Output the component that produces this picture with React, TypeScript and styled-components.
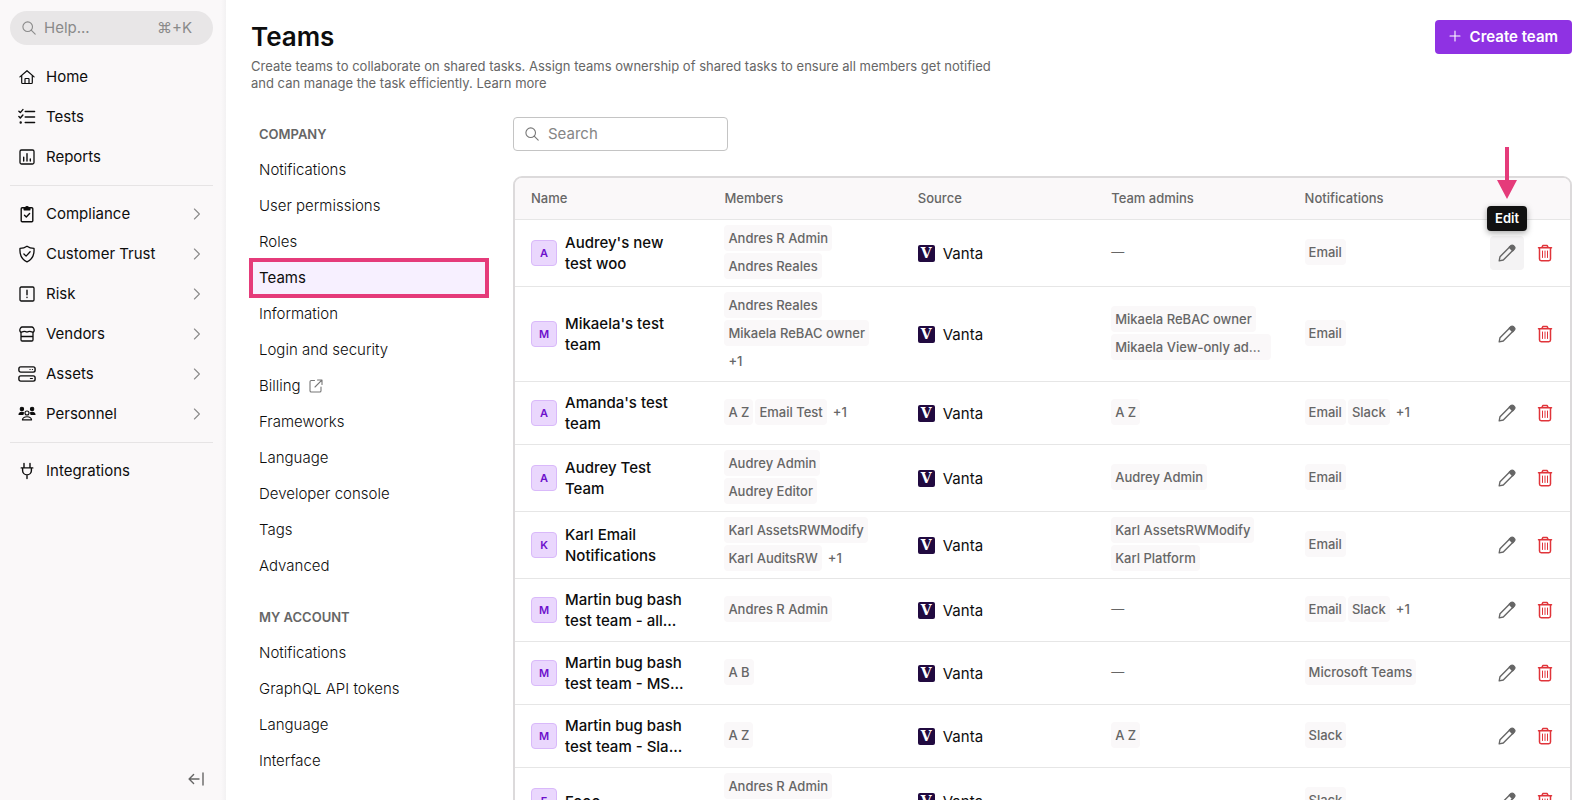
import React, { useState } from "react";
import styled, { createGlobalStyle, css } from "styled-components";

const GlobalStyle = createGlobalStyle`
  *, *::before, *::after { box-sizing: border-box; }
  body {
    margin: 0;
    background: #fff;
    color: #0d0d0d;
    font-family: Inter, "Liberation Sans", sans-serif;
    font-size: 15px;
    line-height: 21px;
  }
  button, input { font: inherit; color: inherit; }
  a { color: inherit; text-decoration: none; }
`;

/* ---------- Icons ---------- */

const Svg = styled.svg`
  flex: none;
  display: block;
  fill: none;
  stroke: currentColor;
  stroke-linecap: round;
  stroke-linejoin: round;
`;

const SearchIcon = () => (
  <Svg width="14" height="14" viewBox="0 0 14 14" strokeWidth="1.1">
    <circle cx="5.7" cy="5.7" r="4.8" />
    <path d="M9.2 9.2 13.2 13.2" />
  </Svg>
);

const HomeIcon = () => (
  <Svg width="18" height="18" viewBox="0 0 18 18" strokeWidth="1.2">
    <path d="M1.900 8.900 9 2.700l7.100 6.200" />
    <path d="M3.700 7.600v7c0 .5.300.9.800.9h9c.500 0 .8-.4.8-.9v-7" />
    <path d="M7 15.300v-4.300c0-.3.200-.5.500-.5h3c.3 0 .5.200.5.500v4.300" />
  </Svg>
);

const TestsIcon = () => (
  <Svg width="18" height="18" viewBox="0 0 18 18" strokeWidth="1.4">
    <path d="M7.200 3.500h9.400M7.200 9h9.400M7.200 14.500h9.400" />
    <path d="m.9 3.200 1.400 1.400 2.600-3M.9 8.600 2.300 10l2.600-3" />
    <circle cx="2.700" cy="14.500" r=".5" fill="currentColor" />
  </Svg>
);

const ReportsIcon = () => (
  <Svg width="18" height="18" viewBox="0 0 18 18" strokeWidth="1.3">
    <rect x="2" y="2" width="14" height="14" rx="1.500" />
    <path d="M5.700 9.300v3.700M9 5.600V13M12.300 11v2" strokeWidth="1.400" />
  </Svg>
);

const ComplianceIcon = () => (
  <Svg width="18" height="18" viewBox="0 0 18 18" strokeWidth="1.4">
    <rect x="3.200" y="2.800" width="11.600" height="14" rx="1" />
    <path d="M6.200 4.800V2.700h1.400a1.500 1.500 0 0 1 2.800 0h1.400v2.100z" fill="currentColor" />
    <path d="m6.500 10.200 1.800 1.700 3.300-3.500" />
  </Svg>
);

const TrustIcon = () => (
  <Svg width="18" height="18" viewBox="0 0 18 18" strokeWidth="1.3">
    <path d="M9 1.200c2 1.400 4.300 2.100 7 2.200.5 6.300-1.700 11.100-7 13.400-5.300-2.300-7.500-7.100-7-13.400C4.700 3.300 7 2.600 9 1.200z" />
    <path d="m5.900 9 2.200 2.100 4-4.300" />
  </Svg>
);

const RiskIcon = () => (
  <Svg width="18" height="18" viewBox="0 0 18 18" strokeWidth="1.3">
    <rect x="2" y="2" width="14" height="14" rx="1.200" />
    <path d="M9 5.300v4.400M9 12.300v.2" strokeWidth="1.400" />
  </Svg>
);

const VendorsIcon = () => (
  <Svg width="18" height="18" viewBox="0 0 18 18" strokeWidth="1.3">
    <path d="M4.200 2h9.600c1.300 0 2.400 1.700 2.400 3.200 0 1.200-.9 1.900-1.900 1.900-1.100 0-1.700-.8-2.700-.8s-1.600.8-2.600.8-1.600-.8-2.600-.8-1.600.8-2.700.8c-1 0-1.900-.7-1.900-1.900C1.800 3.700 2.900 2 4.200 2z" />
    <path d="M3 7.300v7.500c0 .7.500 1.200 1.200 1.200h9.600c.7 0 1.200-.5 1.200-1.200V7.300M3.200 11.500h11.600" />
  </Svg>
);

const AssetsIcon = () => (
  <Svg width="18" height="18" viewBox="0 0 18 18" strokeWidth="1.4">
    <rect x=".9" y="1.900" width="16.200" height="5.200" rx="1.800" />
    <rect x=".9" y="10.900" width="16.200" height="5.200" rx="1.800" />
    <path d="M12 4.500h.1M14.400 4.500h.1M12.400 13.500h2" strokeWidth="1.200" />
  </Svg>
);

const PersonnelIcon = () => (
  <Svg width="18" height="18" viewBox="0 0 18 18" strokeWidth="1.1">
    <circle cx="3.900" cy="3.900" r="1.700" fill="currentColor" />
    <circle cx="14.100" cy="3.900" r="1.700" fill="currentColor" />
    <path d="M1 9.500c.2-1.500 1.300-2.300 2.900-2.300.8 0 1.400.2 1.800.6-.7.500-.8 1-.7 1.700zM17 9.500c-.2-1.500-1.300-2.300-2.900-2.300-.8 0-1.400.2-1.800.6.700.5.8 1 .7 1.700z" fill="currentColor" />
    <circle cx="9" cy="8" r="2" />
    <path d="M4.400 14.900c.3-2 1.900-3.100 4.600-3.100s4.300 1.100 4.600 3.100z" />
  </Svg>
);

const PlugIcon = () => (
  <Svg width="18" height="18" viewBox="0 0 18 18" strokeWidth="1.400">
    <path d="M6 1.500v3.700M12 1.500v3.700M3.200 5.900h11.600M4.600 6.100v2.400a4.400 4.400 0 0 0 8.800 0V6.100M9 13.100v3.500" />
  </Svg>
);

const ChevronIcon = () => (
  <Svg width="8" height="12" viewBox="0 0 8 12" strokeWidth="1.100">
    <path d="M1.400 1 6.400 6 1.400 11" />
  </Svg>
);

const CollapseIcon = () => (
  <Svg width="18" height="14" viewBox="0 0 18 14" strokeWidth="1.400">
    <path d="M16 1v12M12 7H2.200M6.600 2.500 2.100 7l4.500 4.500" />
  </Svg>
);

const PlusIcon = () => (
  <Svg width="12" height="12" viewBox="0 0 12 12" strokeWidth="1.100">
    <path d="M6 1v10M1 6h10" />
  </Svg>
);

const ExternalIcon = () => (
  <Svg width="14" height="14" viewBox="0 0 14 14" strokeWidth="1.100">
    <path d="M5.500 1.500H2.300c-.8 0-1.300.5-1.300 1.300v8.900c0 .8.500 1.300 1.300 1.300h8.400c.8 0 1.300-.5 1.300-1.300V8M8.500 1H13v4.500M12.800 1.200 6 8" />
  </Svg>
);

const PencilIcon = () => (
  <Svg width="18" height="18" viewBox="0 0 18 18" strokeWidth="1.400">
    <path d="M1.200 16.900l.8-4.200L11.900 2.800l3.300 3.300L5.300 16z" />
    <path d="M11.300 3.300 13 1.600c.7-.7 1.600-.7 2.300 0l1.100 1.100c.7.700.7 1.600 0 2.300l-1.700 1.700z" fill="currentColor" />
  </Svg>
);

const TrashIcon = () => (
  <Svg width="16" height="18" viewBox="0 0 16 18" strokeWidth="1.500">
    <path d="M1.500 3.800h13M4.800 3.600 6 1.400h4l1.200 2.200" />
    <path d="M2.500 4v11c0 1 .7 1.700 1.700 1.700h7.600c1 0 1.700-.7 1.700-1.700V4" />
    <path d="M5.500 7v6.500M8 7v6.500M10.500 7v6.500" strokeWidth="1" />
  </Svg>
);

/* ---------- Sidebar ---------- */

const Shell = styled.div`
  display: flex;
  height: 100vh;
`;

const Sidebar = styled.aside`
  flex: none;
  width: 226px;
  padding: 11px 13px 10px 10px;
  display: flex;
  flex-direction: column;
  background: linear-gradient(to left, #f3f2f3, #faf8f9 5px);
`;

const HelpBox = styled.label`
  display: flex;
  align-items: center;
  gap: 8px;
  height: 34px;
  margin-bottom: 12px;
  padding: 0 21px 1px 12px;
  border-radius: 17px;
  background: #e8e6e7;
  color: #8a8a8a;
`;

const HelpInput = styled.input`
  flex: 1;
  min-width: 0;
  padding: 0;
  border: 0;
  outline: 0;
  background: transparent;
  &::placeholder { color: #8a8a8a; opacity: 1; }
`;

const NavGroup = styled.ul`
  margin: 0;
  padding: 0;
  list-style: none;
  & + & {
    margin-top: 8px;
    padding-top: 8px;
    border-top: 1px solid #e6e4e5;
  }
`;

const NavLink = styled.a`
  display: flex;
  align-items: center;
  gap: 10px;
  height: 40px;
  padding: 0 12px 1px 8px;
`;

const NavLabel = styled.span`
  flex: 1;
`;

const Muted = styled.span`
  color: #8a8a8a;
`;

const EmptyMark = styled.span`
  color: #666;
  font-size: 13px;
`;

const CollapseButton = styled.button`
  align-self: flex-end;
  margin: auto 8px 0 0;
  padding: 4px 0;
  border: 0;
  background: none;
  color: #666;
  cursor: pointer;
`;

type NavItem = { label: string; icon: React.ReactNode; expandable?: boolean };

const NAV: NavItem[][] = [
  [
    { label: "Home", icon: <HomeIcon /> },
    { label: "Tests", icon: <TestsIcon /> },
    { label: "Reports", icon: <ReportsIcon /> },
  ],
  [
    { label: "Compliance", icon: <ComplianceIcon />, expandable: true },
    { label: "Customer Trust", icon: <TrustIcon />, expandable: true },
    { label: "Risk", icon: <RiskIcon />, expandable: true },
    { label: "Vendors", icon: <VendorsIcon />, expandable: true },
    { label: "Assets", icon: <AssetsIcon />, expandable: true },
    { label: "Personnel", icon: <PersonnelIcon />, expandable: true },
  ],
  [{ label: "Integrations", icon: <PlugIcon /> }],
];

/* ---------- Page ---------- */

const Page = styled.main`
  flex: 1;
  min-width: 0;
  padding: 20px 23px 0 25px;
  overflow-y: auto;
  scrollbar-width: none;
`;

const PageHeader = styled.header`
  display: flex;
  align-items: flex-start;
  justify-content: space-between;
  margin-bottom: 25px;
`;

const Title = styled.h1`
  margin: 0 0 4px;
  font-size: 26px;
  line-height: 34px;
  font-weight: 600;
`;

const Description = styled.p`
  max-width: 748px;
  margin: 0;
  font-size: 13px;
  line-height: 17px;
  color: #666;
`;

const PrimaryButton = styled.button`
  display: flex;
  align-items: center;
  gap: 9px;
  height: 34px;
  padding: 0 14px 2px;
  border: 0;
  border-radius: 4px;
  background: #8f32e3;
  color: #fff;
  font-weight: 600;
  cursor: pointer;
`;

const Columns = styled.div`
  display: flex;
  gap: 26px;
`;

const Settings = styled.nav`
  flex: none;
  width: 236px;
`;

const SettingsHeading = styled.h2`
  margin: 0;
  padding: 0 8px 1px;
  font-size: 13px;
  line-height: 34px;
  font-weight: 600;
  color: #666;
  ul + & { margin-top: 16px; }
`;

const SettingsList = styled.ul`
  margin: 0;
  padding: 0;
  list-style: none;
`;

const SettingsLink = styled.a<{ $active?: boolean }>`
  display: flex;
  align-items: center;
  gap: 8px;
  height: 36px;
  padding: 0 8px 1px;
  font-weight: 300;
  svg { color: #777; }
  ${(p) =>
    p.$active &&
    css`
      background: #f7f0ff;
      font-weight: 400;
      outline: 4px solid #e53b7a;
      outline-offset: -2px;
    `}
`;

const Content = styled.section`
  flex: 1;
  min-width: 0;
`;

const SearchBox = styled.label`
  display: flex;
  align-items: center;
  gap: 9px;
  width: 215px;
  height: 34px;
  margin-bottom: 25px;
  padding: 0 11px 1px;
  border: 1px solid #c4c4c4;
  border-radius: 4px;
  color: #777;
`;

const SearchInput = styled.input`
  flex: 1;
  min-width: 0;
  padding: 0;
  border: 0;
  outline: 0;
  background: transparent;
  &::placeholder { color: #858585; opacity: 1; }
`;

/* ---------- Table ---------- */

const Table = styled.table`
  width: 100%;
  table-layout: fixed;
  border: 2px solid #dcdadb;
  border-radius: 9px;
  border-collapse: separate;
  border-spacing: 0;
`;

const HeadCell = styled.th<{ $actions?: boolean }>`
  width: ${(p) => (p.$actions ? "88px" : "auto")};
  height: 42px;
  padding: 0 16px;
  background: #faf8f9;
  border-bottom: 1px solid #e6e6e6;
  text-align: left;
  font-size: 13px;
  font-weight: 500;
  color: #666;
  &:first-child { border-top-left-radius: 7px; }
  &:last-child { border-top-right-radius: 7px; }
`;

const Cell = styled.td<{ $kind?: "name" | "tags" | "actions" }>`
  padding: ${(p) =>
    p.$kind === "name" ? "10px 16px" : p.$kind === "tags" ? "5px 16px 7px" : p.$kind === "actions" ? "0 8px" : "0 16px"};
  border-bottom: 1px solid #e6e6e6;
  vertical-align: middle;
`;

const Inline = styled.div`
  display: flex;
  align-items: center;
  gap: 8px;
`;

const Avatar = styled.span`
  flex: none;
  width: 26px;
  height: 26px;
  border: 1px solid #d9b9fa;
  border-radius: 4px;
  background: #ead7fd;
  color: #6d10cc;
  font-size: 11px;
  line-height: 24px;
  font-weight: 600;
  text-align: center;
`;

const TeamName = styled.span`
  font-weight: 500;
`;

const Logo = styled.span`
  flex: none;
  width: 17px;
  height: 17px;
  border-radius: 2px;
  background: #210a40;
  color: #fff;
  font: bold 14px/17px "DejaVu Serif", serif;
  text-align: center;
`;

const Tags = styled.div`
  display: flex;
  flex-wrap: wrap;
  gap: 2px;
`;

const Tag = styled.span<{ $plain?: boolean }>`
  max-width: 160px;
  padding: 0 4px;
  overflow: hidden;
  border-radius: 4px;
  background: ${(p) => (p.$plain ? "transparent" : "#faf8f9")};
  color: #666;
  font-size: 13px;
  line-height: 26px;
  font-weight: 500;
  text-overflow: ellipsis;
  white-space: nowrap;
`;

const Actions = styled.div`
  display: flex;
  gap: 4px;
`;

const IconButton = styled.button<{ $danger?: boolean; $hovered?: boolean }>`
  position: relative;
  display: flex;
  align-items: center;
  justify-content: center;
  width: 34px;
  height: 34px;
  padding: 0;
  border: 0;
  border-radius: 4px;
  background: ${(p) => (p.$hovered ? "#f4f3f4" : "transparent")};
  color: ${(p) => (p.$danger ? "#e0343a" : "#666")};
  cursor: pointer;
`;

const Callout = styled.span`
  position: absolute;
  bottom: 100%;
  left: 50%;
  transform: translateX(-50%);
  display: flex;
  flex-direction: column;
  align-items: center;
  gap: 7px;
  padding-bottom: 5px;
`;

const Tooltip = styled.span`
  padding: 0 8px;
  border-radius: 4px;
  background: #111;
  box-shadow: 0 2px 6px rgba(0, 0, 0, 0.35);
  color: #fff;
  font-size: 13px;
  line-height: 25px;
  font-weight: 600;
`;

const Arrow = () => (
  <svg width="20" height="52" viewBox="0 0 20 52">
    <path d="M8 0h4v33h8L10 52 0 33h8z" fill="#e53b7a" />
  </svg>
);

type Team = { name: string; members: string[]; admins: string[]; notify: string[] };

const TEAMS: Team[] = [
  { name: "Audrey's new test woo", members: ["Andres R Admin", "Andres Reales"], admins: [], notify: ["Email"] },
  {
    name: "Mikaela's test team",
    members: ["Andres Reales", "Mikaela ReBAC owner", "+1"],
    admins: ["Mikaela ReBAC owner", "Mikaela View-only admin"],
    notify: ["Email"],
  },
  { name: "Amanda's test team", members: ["A Z", "Email Test", "+1"], admins: ["A Z"], notify: ["Email", "Slack", "+1"] },
  { name: "Audrey Test Team", members: ["Audrey Admin", "Audrey Editor"], admins: ["Audrey Admin"], notify: ["Email"] },
  {
    name: "Karl Email Notifications",
    members: ["Karl AssetsRWModify", "Karl AuditsRW", "+1"],
    admins: ["Karl AssetsRWModify", "Karl Platform"],
    notify: ["Email"],
  },
  { name: "Martin bug bash test team - all...", members: ["Andres R Admin"], admins: [], notify: ["Email", "Slack", "+1"] },
  { name: "Martin bug bash test team - MS...", members: ["A B"], admins: [], notify: ["Microsoft Teams"] },
  { name: "Martin bug bash test team - Sla...", members: ["A Z"], admins: ["A Z"], notify: ["Slack"] },
  { name: "Fooo", members: ["Andres R Admin", "Andres Reales"], admins: [], notify: ["Slack"] },
];

const TagList = ({ items }: { items: string[] }) =>
  items.length === 0 ? (
    <EmptyMark>—</EmptyMark>
  ) : (
    <Tags>
      {items.map((t) => (
        <Tag key={t} $plain={t.startsWith("+")}>
          {t}
        </Tag>
      ))}
    </Tags>
  );

const COMPANY = [
  "Notifications",
  "User permissions",
  "Roles",
  "Teams",
  "Information",
  "Login and security",
  "Billing",
  "Frameworks",
  "Language",
  "Developer console",
  "Tags",
  "Advanced",
];
const ACCOUNT = ["Notifications", "GraphQL API tokens", "Language", "Interface"];

const SettingsLinks = ({ items }: { items: string[] }) => (
  <SettingsList>
    {items.map((label) => (
      <li key={label}>
        <SettingsLink href="#" $active={label === "Teams"}>
          {label}
          {label === "Billing" && <ExternalIcon />}
        </SettingsLink>
      </li>
    ))}
  </SettingsList>
);

export default function App() {
  const [help, setHelp] = useState("");
  const [query, setQuery] = useState("");

  return (
    <Shell>
      <GlobalStyle />
      <Sidebar>
        <HelpBox>
          <SearchIcon />
          <HelpInput aria-label="Help" placeholder="Help..." value={help} onChange={(e) => setHelp(e.target.value)} />
          <Muted>⌘+K</Muted>
        </HelpBox>
        {NAV.map((group, i) => (
          <NavGroup key={i}>
            {group.map((item) => (
              <li key={item.label}>
                <NavLink href="#">
                  {item.icon}
                  <NavLabel>{item.label}</NavLabel>
                  {item.expandable && (
                    <Muted>
                      <ChevronIcon />
                    </Muted>
                  )}
                </NavLink>
              </li>
            ))}
          </NavGroup>
        ))}
        <CollapseButton aria-label="Collapse sidebar">
          <CollapseIcon />
        </CollapseButton>
      </Sidebar>

      <Page>
        <PageHeader>
          <div>
            <Title>Teams</Title>
            <Description>
              Create teams to collaborate on shared tasks. Assign teams ownership of shared tasks to ensure all members
              get notified and can manage the task efficiently. <a href="#">Learn more</a>
            </Description>
          </div>
          <PrimaryButton>
            <PlusIcon />
            Create team
          </PrimaryButton>
        </PageHeader>

        <Columns>
          <Settings aria-label="Settings">
            <SettingsHeading>COMPANY</SettingsHeading>
            <SettingsLinks items={COMPANY} />
            <SettingsHeading>MY ACCOUNT</SettingsHeading>
            <SettingsLinks items={ACCOUNT} />
          </Settings>

          <Content>
            <SearchBox>
              <SearchIcon />
              <SearchInput
                aria-label="Search"
                placeholder="Search"
                value={query}
                onChange={(e) => setQuery(e.target.value)}
              />
            </SearchBox>
            <Table>
              <thead>
                <tr>
                  <HeadCell>Name</HeadCell>
                  <HeadCell>Members</HeadCell>
                  <HeadCell>Source</HeadCell>
                  <HeadCell>Team admins</HeadCell>
                  <HeadCell>Notifications</HeadCell>
                  <HeadCell $actions aria-label="Actions" />
                </tr>
              </thead>
              <tbody>
                {TEAMS.map((team, i) => (
                  <tr key={team.name}>
                    <Cell $kind="name">
                      <Inline>
                        <Avatar>{team.name[0]}</Avatar>
                        <TeamName>{team.name}</TeamName>
                      </Inline>
                    </Cell>
                    <Cell $kind="tags">
                      <TagList items={team.members} />
                    </Cell>
                    <Cell>
                      <Inline>
                        <Logo aria-hidden="true">V</Logo>
                        Vanta
                      </Inline>
                    </Cell>
                    <Cell $kind="tags">
                      <TagList items={team.admins} />
                    </Cell>
                    <Cell $kind="tags">
                      <TagList items={team.notify} />
                    </Cell>
                    <Cell $kind="actions">
                      <Actions>
                        <IconButton aria-label={`Edit ${team.name}`} $hovered={i === 0}>
                          <PencilIcon />
                          {i === 0 && (
                            <Callout>
                              <Arrow />
                              <Tooltip>Edit</Tooltip>
                            </Callout>
                          )}
                        </IconButton>
                        <IconButton aria-label={`Delete ${team.name}`} $danger>
                          <TrashIcon />
                        </IconButton>
                      </Actions>
                    </Cell>
                  </tr>
                ))}
              </tbody>
            </Table>
          </Content>
        </Columns>
      </Page>
    </Shell>
  );
}
